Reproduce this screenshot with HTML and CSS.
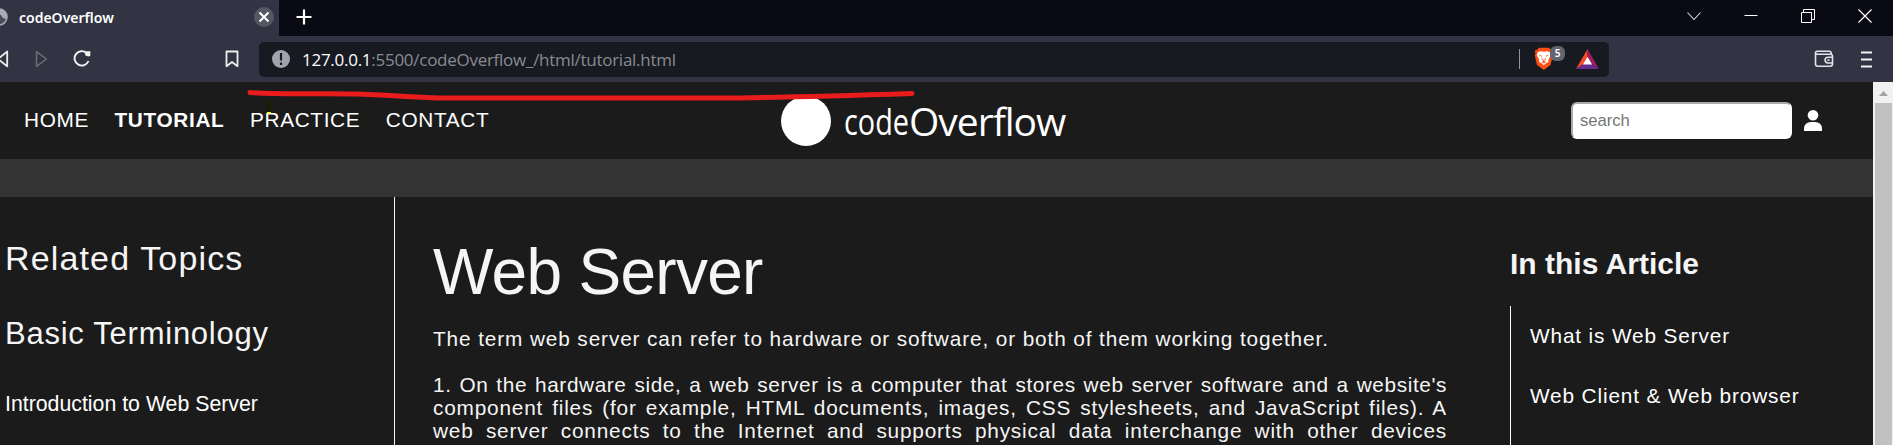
FILE: index.html
```html
<!DOCTYPE html>
<html lang="en">
<head>
<meta charset="utf-8">
<title>codeOverflow</title>
<link rel="stylesheet" href="styles.css">
</head>
<body>
<div class="tabbar">
  <div class="tab">
    <svg class="globe" width="8" height="18" viewBox="0 0 8 18"><circle cx="-1" cy="9" r="8" fill="#4a4d5a" stroke="#a9abb6" stroke-width="1.6"/><path d="M-1 1Q4 1 6.500 6L6 11Q2 10 1 7L-2 6Z" fill="#a9abb6"/></svg>
    <span class="tab-title">codeOverflow</span>
    <svg class="tab-close" width="20" height="20" viewBox="0 0 20 20"><circle cx="10" cy="10" r="10" fill="#555763"/><path d="M5.500 5.500l9 9m0-9l-9 9" stroke="#fff" stroke-width="2"/></svg>
  </div>
  <svg class="plus" width="16" height="16" viewBox="0 0 16 16"><path d="M8 .5v15M.5 8h15" stroke="#fff" stroke-width="2.200"/></svg>
  <div class="window-controls">
    <svg width="14" height="14" viewBox="0 0 14 14"><path d="M.5 3.500L7 10.500l6.500-7" fill="none" stroke="#ddd" stroke-width="1.100"/></svg>
    <svg width="14" height="14" viewBox="0 0 14 14"><path d="M.5 6.500h13" stroke="#fff"/></svg>
    <svg width="14" height="14" viewBox="0 0 14 14"><path d="M.5 3.500h10v10H.5zM2.500 3.500V.5h11v10h-3" fill="none" stroke="#fff"/></svg>
    <svg width="14" height="14" viewBox="0 0 14 14"><path d="M.5 .5l13 13m0-13l-13 13" stroke="#fff" stroke-width="1.200"/></svg>
  </div>
</div>
<div class="toolbar">
  <svg class="back" width="9" height="18" viewBox="0 0 9 18"><path d="M7.200 1.500v14.800L-2 9z" fill="none" stroke="#eee" stroke-width="1.800" stroke-linejoin="round"/></svg>
  <svg class="forward" width="14" height="18" viewBox="0 0 14 18"><path d="M1.500 1.700v14.600L11.500 9z" fill="none" stroke="#6c6e7a" stroke-width="1.500" stroke-linejoin="round"/></svg>
  <svg class="reload" width="18" height="18" viewBox="0 0 18 18"><path d="M13.700 3.100A7.200 7.200 0 1 0 15.500 11" fill="none" stroke="#f2f2f2" stroke-width="1.900"/><path d="M11.500 2.800L12.500 1.300h4.800v4.500L15.800 6.500 12.700 5.800z" fill="#f2f2f2"/></svg>
  <svg class="bookmark" width="14" height="18" viewBox="0 0 14 18"><path d="M1.500 1.500h11v14.700L7 12l-5.500 4.200z" fill="none" stroke="#eee" stroke-width="1.800" stroke-linejoin="round"/></svg>
  <div class="address">
    <svg class="warn" width="18" height="18" viewBox="0 0 18 18"><circle cx="9" cy="9" r="9" fill="#a1a3ad"/><path d="M9 3v7.500M9 12.500v2.500" stroke="#181a21" stroke-width="2.200"/></svg>
    <span class="url"><b>127.0.0.1</b>:5500/codeOverflow_/html/tutorial.html</span>
    <span class="divider"></span>
    <span class="shield">
      <svg width="20" height="24" viewBox="0 0 20 24"><path d="M5 .8h10l2 2.300 2 .5-.8 3 .6 2-2.300 9.400L9.800 23 3 18 .8 8.600l.6-2L.8 3.600l2-.5z" fill="#fb4f13"/><path d="M4 5l3-.8 2.800.6 2.800-.6 3 .8 1.300 3-2.600 5 .3 2-3 1.500-1.800 1.700L8 16.500 5 15l.3-2-2.600-5z" fill="#fff"/><path d="M4.500 7.800l3.500.9-.7 1zM15.100 7.800l-3.500.9.7 1zM7.600 9.500l.8 2.700 1.400.9 1.400-.9.8-2.700-.2 3.300-2 1.200-2-1.200zM7.300 15l2.500-.9 2.500.9-2.500 1.200z" fill="#fb4f13"/></svg>
      <span class="badge">5</span>
    </span>
    <svg class="bat" width="23" height="20" viewBox="0 0 23 20"><path d="M11.500 0L0 20l7.500-5 4-7z" fill="#ff4724"/><path d="M11.500 0L23 20l-7.500-5-4-7z" fill="#9e1f63"/><path d="M0 20h23l-7.500-5h-8z" fill="#662d91"/><path d="M11.500 7.800l4.600 7.700H6.900z" fill="#fff"/></svg>
  </div>
  <svg class="wallet" width="20" height="18" viewBox="0 0 20 18"><path d="M1.500 3v11q0 2.200 2.200 2.200H16q2.500 0 2.500-2.200V6.200Q18.500 4.200 16.500 4.200H3Q1.500 4 1.500 2.700T3 1.200h12.500q1.800 0 1.800 2.800M18.500 7.200H14a2.900 2.900 0 0 0 0 5.800h4.500M13.500 10.100h2" fill="none" stroke="#e2e3e8" stroke-width="1.600"/></svg>
  <svg class="menu" width="11" height="17" viewBox="0 0 11 17"><path d="M0 1.500h11M0 8.500h11M0 15.500h11" stroke="#f2f2f2" stroke-width="1.900"/></svg>
</div>
<div class="viewport">
  <div class="page">
    <header class="header">
      <nav class="nav"><a>HOME</a><a class="active">TUTORIAL</a><a>PRACTICE</a><a>CONTACT</a></nav>
      <div class="logo"><span class="disc"></span><span class="code">code</span><span class="overflow">Overflow</span></div>
      <div class="search"><input type="text" placeholder="search"><svg width="18" height="21" viewBox="0 0 18 21"><circle cx="9" cy="5.300" r="5.300" fill="#fff"/><path d="M0 21v-2.500Q.5 12 7 12h4q6.500 0 7 6.500V21z" fill="#fff"/></svg></div>
    </header>
    <div class="strip"></div>
    <main class="main">
      <aside class="topics">
        <h2>Related Topics</h2>
        <h3>Basic Terminology</h3>
        <p>Introduction to Web Server</p>
      </aside>
      <article class="article">
        <h1>Web Server</h1>
        <p>The term web server can refer to hardware or software, or both of them working together.</p>
        <p class="last"><span class="snug">1. On the hardware side, a web server is a computer that stores web server software and a website's</span><br>component files (for example, HTML documents, images, CSS stylesheets, and JavaScript files). A<br>web server connects to the Internet and supports physical data interchange with other devices</p>
      </article>
      <aside class="contents">
        <h2>In this Article</h2>
        <ul><li>What is Web Server</li><li>Web Client &amp; Web browser</li></ul>
      </aside>
    </main>
  </div>
  <div class="scrollbar"><svg width="9" height="5" viewBox="0 0 9 5"><path d="M0 5L4.500 0 9 5z" fill="#a3a3a3"/></svg><div class="thumb"></div></div>
</div>
<svg class="underline" width="1893" height="445" viewBox="0 0 1893 445"><path d="M267 100h4v12h-4z" fill="#1c1c00"/><path d="M267 112h4v1.500h-4z" fill="#ffff00"/><path d="M250 92.500C280 95 320 93 355 94C390 95 410 97.500 440 98L740 98C800 97 850 95.500 912 93.500" fill="none" stroke="#e81c1c" stroke-width="5" stroke-linecap="round"/></svg>
</body>
</html>
```
FILE: styles.css
```css
* { box-sizing: border-box; }
body { margin: 0; width: 1893px; height: 445px; overflow: hidden; background: #1b1b1b; color: #fff; font-family: "Liberation Sans", Arial, sans-serif; }
svg { display: block; flex: none; }
h1, h2, h3, p, ul { margin: 0; padding: 0; font-weight: 400; white-space: nowrap; }

.tabbar { height: 36px; background: #0a0a14; display: flex; align-items: center; }
.tab { width: 279px; height: 36px; background: #323443; display: flex; align-items: center; padding: 0 5px 2px 0; }
.tab-title { font: 600 14px "Noto Sans", "Open Sans", sans-serif; margin-left: 11px; flex: 1; letter-spacing: 0; }
.plus { margin: 0 0 3px 17px; }
.window-controls { margin: 0 21px 4px auto; display: flex; gap: 43px; }

.toolbar { height: 46px; background: #323443; display: flex; align-items: center; }
.forward { margin-left: 26px; }
.reload { margin-left: 24px; }
.bookmark { margin-left: 134px; }
.address { margin-left: 20px; width: 1350px; height: 35px; border-radius: 5px; background: #181a21; display: flex; align-items: center; padding: 0 10px 0 13px; }
.url { margin-left: 12px; flex: 1; font: 17px "Open Sans", sans-serif; letter-spacing: -.27px; color: #898b91; }
.url b { color: #fff; font-weight: 400; }
.divider { width: 1px; height: 20px; background: #92949b; }
.shield { position: relative; margin-left: 14px; width: 30px; }
.badge { position: absolute; left: 16px; top: -1px; width: 15px; height: 15px; border-radius: 6px; background: #62646f; font: 600 10px/15px "Noto Sans", sans-serif; text-align: center; }
.bat { margin-left: 12px; }
.wallet { margin-left: 205px; }
.menu { margin-left: 27px; }

.viewport { height: 363px; display: flex; }
.page { width: 1873px; overflow: hidden; }
.header { height: 77px; display: flex; align-items: center; padding-left: 24px; }
.nav { width: 757px; display: flex; gap: 25.5px; padding-bottom: 2px; font-size: 20.8px; letter-spacing: .65px; }
.active { font-weight: 700; }
.logo { width: 790px; display: flex; align-items: center; font: 39px/50px "Open Sans", sans-serif; }
.disc { width: 50px; height: 50px; border-radius: 50%; background: #fff; }
.code { width: 65px; margin-left: 13px; transform: scaleX(.79); transform-origin: left; font-size: 36.5px; }
.overflow { letter-spacing: -1px; }
.search { display: flex; align-items: center; gap: 12px; }
.search input { width: 221px; height: 37px; border: 2px solid #fff; border-top-color: #aaa; border-left-color: #aaa; border-radius: 6px; padding: 0 7px; background: #fff; font: 16.6px "Liberation Sans", Arial, sans-serif; }
.search input::placeholder { color: #757575; }
.strip { height: 38px; background: #333; }
.main { height: 248px; display: flex; color: #f5f5f5; }
.topics { width: 395px; border-right: 1px solid #f5f5f5; padding: 42px 0 0 5px; }
.topics h2 { font-size: 34px; line-height: 38px; letter-spacing: 1.15px; }
.topics h3 { margin-top: 40px; font-size: 31px; line-height: 34px; letter-spacing: .75px; }
.topics p { margin-top: 42px; font-size: 21.3px; line-height: 23px; color: #fff; }
.article { width: 1115px; padding: 39px 63px 0 38px; }
.article h1 { font-size: 64px; line-height: 73px; letter-spacing: -.7px; }
.article p { margin-top: 18px; font-size: 20.8px; line-height: 23px; letter-spacing: .88px; }
.article .last { margin-top: 23px; text-align: justify; text-align-last: justify; white-space: normal; letter-spacing: .8px; }
.snug { letter-spacing: .6px; }
.contents { flex: 1; padding-top: 50px; }
.contents h2 { font-size: 30px; line-height: 34px; font-weight: 700; }
.contents ul { margin-top: 25px; padding: 18px 0 0 19px; height: 160px; border-left: 1px solid #fff; list-style: none; color: #fff; font-size: 20.8px; line-height: 23px; letter-spacing: .86px; }
.contents li + li { margin-top: 37px; }
.scrollbar { width: 20px; background: #f1f1f1; display: flex; flex-direction: column; align-items: center; padding-top: 9px; }
.thumb { width: 17px; margin-top: 7px; flex: 1; background: #c1c1c1; }
.underline { position: absolute; left: 0; top: 0; }
```
